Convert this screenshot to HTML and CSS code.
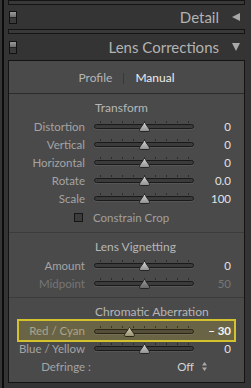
FILE: index.html
```html
<!DOCTYPE html>
<html lang="en">

<head>
   <meta charset="UTF-8" />
   <meta name="viewport" content="width=device-width, initial-scale=1.0" />
   <title>Lens Corrections</title>
   <link rel="stylesheet" href="styles.css">
</head>

<body>
   <div class="app">
      <svg class="defs" width="0" height="0" aria-hidden="true">
         <defs>
            <linearGradient id="knob" x1="0" y1="0" x2="0" y2="1">
               <stop offset="0" stop-color="#d6d6d6" />
               <stop offset="1" stop-color="#8e8e8e" />
            </linearGradient>
            <linearGradient id="knob-off" x1="0" y1="0" x2="0" y2="1">
               <stop offset="0" stop-color="#9a9a9a" />
               <stop offset="1" stop-color="#666" />
            </linearGradient>
            <linearGradient id="knob-hl" x1="0" y1="0" x2="0" y2="1">
               <stop offset="0" stop-color="#d8d2b4" />
               <stop offset="1" stop-color="#948d70" />
            </linearGradient>
         </defs>
      </svg>

      <div class="sep"></div>
      <div class="head head-small">
         <span class="switch"></span>
         <span class="head-title">Detail</span>
         <span class="tri"><i class="tri-left"></i></span>
      </div>
      <div class="sep"></div>
      <div class="head">
         <span class="switch"></span>
         <span class="head-title">Lens Corrections</span>
         <span class="tri"><i class="tri-down"></i></span>
      </div>

      <div class="panel">
         <div class="tabs">
            <span>Profile</span>
            <span class="tab-bar"></span>
            <span class="tab-on">Manual</span>
         </div>

         <section class="group">
            <h2>Transform</h2>
            <div class="row">
               <label>Distortion</label>
               <div class="slider"><i class="ticks"></i><i class="groove"></i>
                  <svg class="thumb" style="left: 50%" viewBox="0 0 11 10"><path d="M5.5 .5C6 .5 6.5 1.5 7 2.5L9.5 6C10.3 7 10.5 7.5 10.5 8.3 10.5 9 10 9.5 9.2 9.5H1.8C1 9.5 .5 9 .5 8.3 .5 7.5.7 7 1.5 6L4 2.5C4.5 1.5 5 .5 5.5.5Z" /></svg>
               </div>
               <output>0</output>
            </div>
            <div class="row">
               <label>Vertical</label>
               <div class="slider"><i class="ticks"></i><i class="groove"></i>
                  <svg class="thumb" style="left: 50%" viewBox="0 0 11 10"><path d="M5.5 .5C6 .5 6.5 1.5 7 2.5L9.5 6C10.3 7 10.5 7.5 10.5 8.3 10.5 9 10 9.5 9.2 9.5H1.8C1 9.5 .5 9 .5 8.3 .5 7.5.7 7 1.5 6L4 2.5C4.5 1.5 5 .5 5.5.5Z" /></svg>
               </div>
               <output>0</output>
            </div>
            <div class="row">
               <label>Horizontal</label>
               <div class="slider"><i class="ticks"></i><i class="groove"></i>
                  <svg class="thumb" style="left: 50%" viewBox="0 0 11 10"><path d="M5.5 .5C6 .5 6.5 1.5 7 2.5L9.5 6C10.3 7 10.5 7.5 10.5 8.3 10.5 9 10 9.5 9.2 9.5H1.8C1 9.5 .5 9 .5 8.3 .5 7.5.7 7 1.5 6L4 2.5C4.5 1.5 5 .5 5.5.5Z" /></svg>
               </div>
               <output>0</output>
            </div>
            <div class="row">
               <label>Rotate</label>
               <div class="slider"><i class="ticks"></i><i class="groove"></i>
                  <svg class="thumb" style="left: 50%" viewBox="0 0 11 10"><path d="M5.5 .5C6 .5 6.5 1.5 7 2.5L9.5 6C10.3 7 10.5 7.5 10.5 8.3 10.5 9 10 9.5 9.2 9.5H1.8C1 9.5 .5 9 .5 8.3 .5 7.5.7 7 1.5 6L4 2.5C4.5 1.5 5 .5 5.5.5Z" /></svg>
               </div>
               <output>0.0</output>
            </div>
            <div class="row">
               <label>Scale</label>
               <div class="slider"><i class="ticks"></i><i class="groove"></i>
                  <svg class="thumb" style="left: 50%" viewBox="0 0 11 10"><path d="M5.5 .5C6 .5 6.5 1.5 7 2.5L9.5 6C10.3 7 10.5 7.5 10.5 8.3 10.5 9 10 9.5 9.2 9.5H1.8C1 9.5 .5 9 .5 8.3 .5 7.5.7 7 1.5 6L4 2.5C4.5 1.5 5 .5 5.5.5Z" /></svg>
               </div>
               <output>100</output>
            </div>
            <div class="check">
               <span class="box"></span>
               <span>Constrain Crop</span>
            </div>
         </section>

         <section class="group">
            <h2>Lens Vignetting</h2>
            <div class="row">
               <label>Amount</label>
               <div class="slider"><i class="ticks"></i><i class="groove"></i>
                  <svg class="thumb" style="left: 50%" viewBox="0 0 11 10"><path d="M5.5 .5C6 .5 6.5 1.5 7 2.5L9.5 6C10.3 7 10.5 7.5 10.5 8.3 10.5 9 10 9.5 9.2 9.5H1.8C1 9.5 .5 9 .5 8.3 .5 7.5.7 7 1.5 6L4 2.5C4.5 1.5 5 .5 5.5.5Z" /></svg>
               </div>
               <output>0</output>
            </div>
            <div class="row off">
               <label>Midpoint</label>
               <div class="slider"><i class="ticks"></i><i class="groove"></i>
                  <svg class="thumb" style="left: 50%" viewBox="0 0 11 10"><path d="M5.5 .5C6 .5 6.5 1.5 7 2.5L9.5 6C10.3 7 10.5 7.5 10.5 8.3 10.5 9 10 9.5 9.2 9.5H1.8C1 9.5 .5 9 .5 8.3 .5 7.5.7 7 1.5 6L4 2.5C4.5 1.5 5 .5 5.5.5Z" /></svg>
               </div>
               <output>50</output>
            </div>
         </section>

         <section class="group">
            <h2>Chromatic Aberration</h2>
            <div class="row hl">
               <label>Red / Cyan</label>
               <div class="slider"><i class="ticks"></i><i class="groove"></i>
                  <svg class="thumb" style="left: 35%" viewBox="0 0 11 10"><path d="M5.5 .5C6 .5 6.5 1.5 7 2.5L9.5 6C10.3 7 10.5 7.5 10.5 8.3 10.5 9 10 9.5 9.2 9.5H1.8C1 9.5 .5 9 .5 8.3 .5 7.5.7 7 1.5 6L4 2.5C4.5 1.5 5 .5 5.5.5Z" /></svg>
               </div>
               <output>&ndash; 30</output>
            </div>
            <div class="row">
               <label>Blue / Yellow</label>
               <div class="slider"><i class="ticks"></i><i class="groove"></i>
                  <svg class="thumb" style="left: 50%" viewBox="0 0 11 10"><path d="M5.5 .5C6 .5 6.5 1.5 7 2.5L9.5 6C10.3 7 10.5 7.5 10.5 8.3 10.5 9 10 9.5 9.2 9.5H1.8C1 9.5 .5 9 .5 8.3 .5 7.5.7 7 1.5 6L4 2.5C4.5 1.5 5 .5 5.5.5Z" /></svg>
               </div>
               <output>0</output>
            </div>
            <div class="row pick">
               <label>Defringe :</label>
               <div class="pick-value">
                  <span>Off</span>
                  <svg class="updown" width="5" height="9" viewBox="0 0 5 9"><path d="M0 3.5 2.5 0 5 3.5ZM0 5.5 2.5 9 5 5.5Z" /></svg>
               </div>
            </div>
         </section>
      </div>
   </div>
</body>

</html>
```

FILE: styles.css
```css
:root {
   --bg: #343434;
   --panel: #4a4a4a;
   --line: #141414;
   --label: #a4a4a4;
   --value: #e2e2e2;
}

* {
   box-sizing: border-box;
}

body {
   margin: 0;
   width: 251px;
   height: 388px;
   overflow: hidden;
   background: var(--bg);
   font-family: Lato, "Open Sans", sans-serif;
   color: var(--label);
}

.app {
   height: 388px;
   margin-left: 2px;
   border-left: 2px solid #0c0c0c;
   padding: 0 6px 0 4px;
}

.defs {
   display: block;
   width: 0;
   height: 0;
}

/* panel headers */

.sep {
   height: 5px;
   border: 1px solid var(--line);
   background: #393939;
}

.head {
   display: flex;
   align-items: center;
   height: 26px;
   padding: 0 5px 0 1px;
}

.head-small {
   height: 24px;
}

.switch {
   width: 8px;
   height: 13px;
   border: 1px solid #111;
   background: linear-gradient(#9a9a9a, #6e6e6e 45%, #222 45%, #222 55%, #3a3a3a 55%);
}

.head-title {
   margin-left: auto;
   font-size: 15px;
   color: #b3b3b3;
}

.tri {
   width: 9px;
   margin-left: 12px;
   display: flex;
   justify-content: center;
}

.tri-left {
   border-top: 4px solid transparent;
   border-bottom: 4px solid transparent;
   border-right: 8px solid #a9a9a9;
}

.tri-down {
   border-left: 4.5px solid transparent;
   border-right: 4.5px solid transparent;
   border-top: 8px solid #a9a9a9;
}

/* lens corrections panel */

.panel {
   height: 323px;
   border: 1px solid var(--line);
   background: var(--panel);
}

.tabs {
   height: 33px;
   display: flex;
   align-items: center;
   justify-content: center;
   gap: 11px;
   border-bottom: 1px solid #2c2c2c;
   font-size: 12px;
   color: #b4b4b4;
}

.tab-bar {
   width: 1px;
   height: 11px;
   margin-top: 3px;
   background: #383838;
}

.tab-on {
   color: #ececec;
}

.group {
   padding: 7px 0 5px;
   border-bottom: 1px solid #3c3c3c;
}

.group:last-child {
   border-bottom: none;
}

.group h2 {
   margin: 0 0 2px;
   padding-left: 86px;
   font-size: 12px;
   line-height: 14px;
   font-weight: normal;
   color: #b6b6b6;
}

.row {
   display: grid;
   grid-template-columns: 76px 100px 1fr;
   column-gap: 9px;
   align-items: center;
   height: 18px;
   padding-right: 13px;
   font-size: 11.5px;
}

.row label {
   text-align: right;
   white-space: nowrap;
}

.row output {
   text-align: right;
   color: var(--value);
}

.row.off label,
.row.off output {
   color: #767676;
}

.row.hl {
   height: 23px;
   margin: -2px 8px -3px;
   grid-template-columns: 66px 100px 1fr;
   padding-right: 3px;
   border: 2px solid #d4c12e;
   background: #6a6446;
}

.row.hl label {
   color: #aca58c;
}

.row.hl output {
   font-weight: 700;
   color: #f2f2f2;
}

/* slider */

.slider {
   position: relative;
   height: 18px;
}

.ticks {
   position: absolute;
   top: 4px;
   left: 6px;
   width: 89px;
   height: 2px;
   background: repeating-linear-gradient(to right, #2b2b2b 0 1px, transparent 1px 11px);
}

.groove {
   position: absolute;
   top: 7px;
   left: 0;
   right: 0;
   height: 5px;
   border: 1px solid #1a1a1a;
   border-radius: 3px;
   background: #3b3b3b;
   box-shadow: 0 1px 0 rgba(255, 255, 255, 0.07);
}

.thumb {
   position: absolute;
   top: 5px;
   width: 11px;
   height: 10px;
   margin-left: -5.5px;
}

.thumb path {
   fill: url(#knob);
   stroke: #252525;
   stroke-width: 1;
}

.row.off .thumb path {
   fill: url(#knob-off);
}

.row.hl .groove {
   border-color: #2a2718;
   background: #554f39;
}

.row.hl .ticks {
   background: repeating-linear-gradient(to right, #3a3626 0 1px, transparent 1px 11px);
}

.row.hl .thumb path {
   fill: url(#knob-hl);
   stroke: #2b2818;
}

/* constrain crop */

.check {
   display: flex;
   align-items: center;
   gap: 10px;
   height: 18px;
   margin: 1px 0;
   padding-left: 65px;
   font-size: 11.5px;
   color: #a0a0a0;
}

.box {
   width: 9px;
   height: 9px;
   border: 1px solid #161616;
   background: #3c3c3c;
}

/* defringe */

.row.pick {
   grid-template-columns: 82px 1fr;
   column-gap: 0;
   padding-right: 37px;
}

.pick-value {
   display: flex;
   justify-content: flex-end;
   align-items: center;
   gap: 8px;
   color: #d4d4d4;
}

.updown path {
   fill: #a8a8a8;
}
```
